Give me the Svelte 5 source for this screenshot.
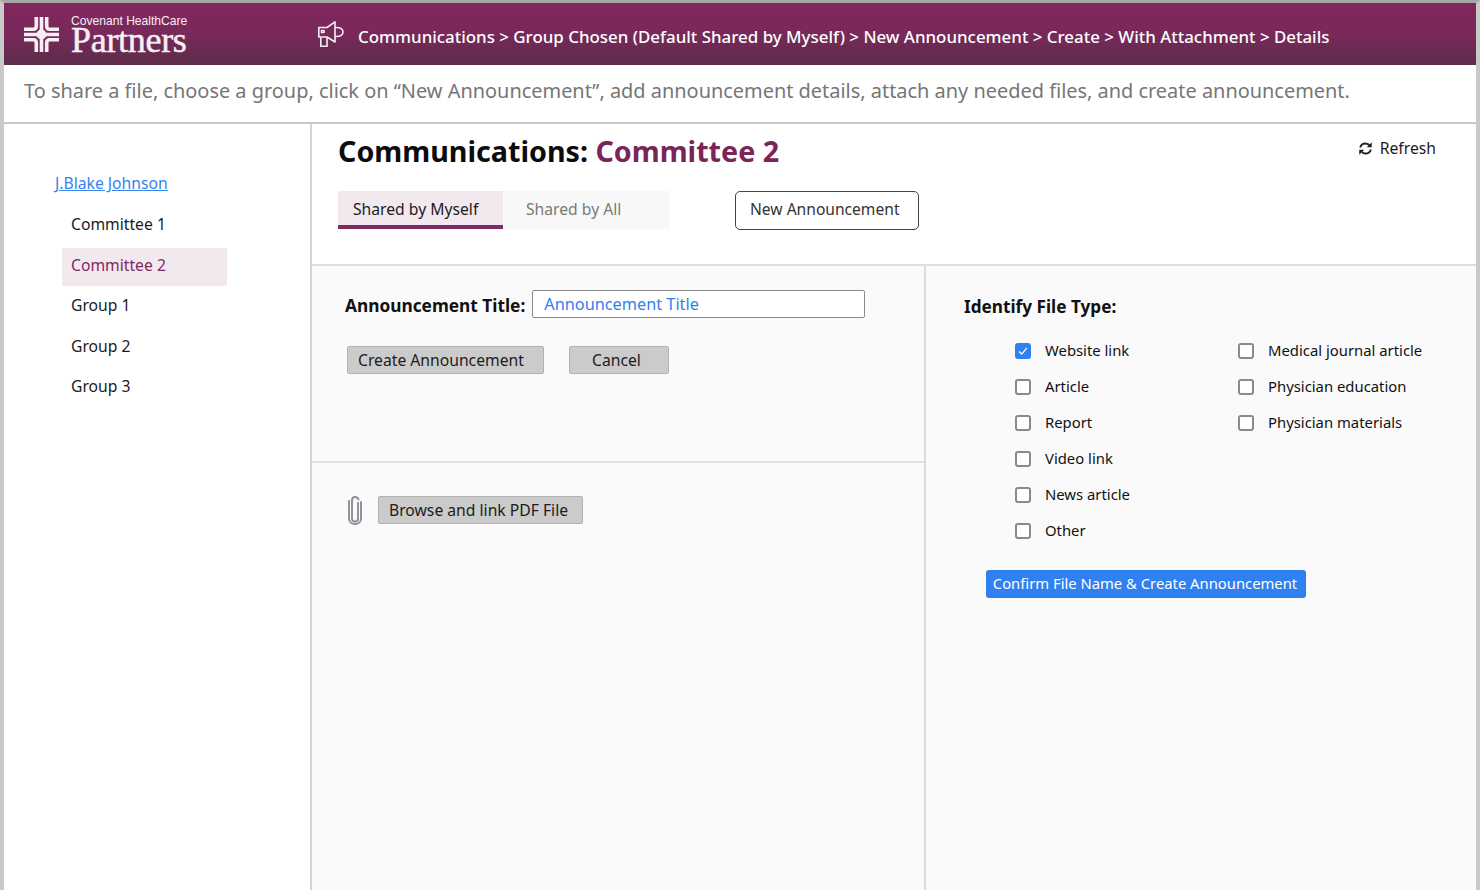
<script lang="ts">
  const groups = ['Committee 1', 'Committee 2', 'Group 1', 'Group 2', 'Group 3'];
  const activeGroup = 'Committee 2';

  const typesLeft = [
    { label: 'Website link', checked: true },
    { label: 'Article' },
    { label: 'Report' },
    { label: 'Video link' },
    { label: 'News article' },
    { label: 'Other' }
  ];
  const typesRight = [
    { label: 'Medical journal article' },
    { label: 'Physician education' },
    { label: 'Physician materials' }
  ];
</script>

<div class="frame">
  <header class="topbar">
    <div class="logo">
      <svg class="logo-mark" viewBox="0 0 35 35" fill="none" stroke="#f6eef3" stroke-width="3.600">
        <path d="M12.300 0V9.300Q12.300 12.300 9.300 12.300H0" />
        <path d="M22.700 0V9.300Q22.700 12.300 25.700 12.300H35" />
        <path d="M12.300 35V25.700Q12.300 22.700 9.300 22.700H0" />
        <path d="M22.700 35V25.700Q22.700 22.700 25.700 22.700H35" />
        <path d="M17.500 0V35M0 17.500H35" />
        <circle cx="17.500" cy="17.500" r="5" fill="#f6eef3" stroke="none" />
      </svg>
      <div class="logo-text">
        <span class="logo-top">Covenant HealthCare</span>
        <span class="logo-main">Partners</span>
      </div>
    </div>
    <svg class="horn" viewBox="0 0 26 26" fill="none" stroke="#f6eef3" stroke-width="1.600" stroke-linejoin="round">
      <path d="M0.800 6.500H9L17 0.800V21L9 16H0.800z" />
      <path d="M17 6.500C23 6 25 8.500 25 11S23 16 17 15.500" />
      <path d="M2.800 16V25.300H9V16" />
      <path d="M3.500 9.500H6V11.500H3.500z" />
    </svg>
    <nav class="crumbs">Communications &gt; Group Chosen (Default Shared by Myself) &gt; New Announcement &gt; Create &gt; With Attachment &gt; Details</nav>
  </header>

  <div class="hint">To share a file, choose a group, click on “New Announcement”, add announcement details, attach any needed files, and create announcement.</div>

  <div class="body">
    <aside class="sidebar">
      <a class="owner" href="#owner">J.Blake Johnson</a>
      <ul class="groups">
        {#each groups as group}
          <li class:active={group === activeGroup}>{group}</li>
        {/each}
      </ul>
    </aside>

    <main class="main">
      <section class="head">
        <div class="title-row">
          <h1>Communications: <span>Committee 2</span></h1>
          <button class="refresh">
            <svg viewBox="0 0 24 24" fill="none" stroke="#222" stroke-width="3">
              <path d="M3.500 10.500C4.500 6.500 8 4 12 4c3 0 5.500 1.400 7 3.800" />
              <path d="M20.500 13.500C19.500 17.500 16 20 12 20c-3 0-5.500-1.400-7-3.800" />
              <path d="M22 2V10h-8z" fill="#222" stroke="none" />
              <path d="M2 22V14h8z" fill="#222" stroke="none" />
            </svg>
            Refresh
          </button>
        </div>
        <div class="tab-row">
          <div class="tabs">
            <div class="tab on">Shared by Myself</div>
            <div class="tab">Shared by All</div>
          </div>
          <button class="new-btn">New Announcement</button>
        </div>
      </section>

      <section class="columns">
        <div class="left">
          <div class="form">
            <div class="title-field">
              <label for="ann-title">Announcement Title:</label>
              <input id="ann-title" value="Announcement Title" />
            </div>
            <div class="actions">
              <button class="grey create">Create Announcement</button>
              <button class="grey cancel">Cancel</button>
            </div>
          </div>
          <div class="attach">
            <svg class="clip" viewBox="0 0 16 30" fill="none" stroke="#8d929b" stroke-width="2" stroke-linecap="round">
              <path d="M11 8v15.500c0 1.800-1.300 3-3 3s-3-1.200-3-3V5.500C5 3.500 6.300 2 8 2s3 1.200 3.500 2.500" />
              <path d="M14 7v16.500c0 3.600-2.700 5.500-6 5.500s-6-1.900-6-5.500V6" />
            </svg>
            <button class="grey browse">Browse and link PDF File</button>
          </div>
        </div>

        <div class="right">
          <h2>Identify File Type:</h2>
          <div class="types">
            <div class="type-col first">
              {#each typesLeft as t}
                <div class="type">
                  <span class="box" class:checked={t.checked}>
                    {#if t.checked}
                      <svg viewBox="0 0 16 16" fill="none" stroke="#fff" stroke-width="1.500"><path d="M3.500 8.500l3 3 6-7" /></svg>
                    {/if}
                  </span>
                  <span class="type-label">{t.label}</span>
                </div>
              {/each}
            </div>
            <div class="type-col">
              {#each typesRight as t}
                <div class="type">
                  <span class="box"></span>
                  <span class="type-label">{t.label}</span>
                </div>
              {/each}
            </div>
          </div>
          <button class="confirm">Confirm File Name &amp; Create Announcement</button>
        </div>
      </section>
    </main>
  </div>
</div>

<style>
  :global(body) {
    background: #fff;
    overflow: hidden;
  }

  .frame {
    height: 890px;
    box-sizing: border-box;
    border-top: 3px solid #a6a6a6;
    border-left: 4px solid #c9c9c9;
    border-right: 4px solid #c9c9c9;
    display: flex;
    flex-direction: column;
    font-family: "Noto Sans", "Open Sans", sans-serif;
    font-size: 15.700px;
    color: #1c1c1c;
    overflow: hidden;
  }

  button {
    font: inherit;
    color: inherit;
    cursor: pointer;
  }

  .topbar {
    height: 62px;
    flex: none;
    display: flex;
    align-items: center;
    background: linear-gradient(#82265e 0%, #78295a 50%, #5c2c4a 100%);
    color: #fff;
  }

  .logo {
    display: flex;
    align-items: center;
    margin-left: 20px;
    width: 294px;
  }

  .logo-mark {
    width: 35px;
    height: 35px;
  }

  .logo-text {
    margin-left: 12px;
    display: flex;
    flex-direction: column;
    color: #f6eef3;
  }

  .logo-top {
    font-family: "Liberation Sans", Arial, sans-serif;
    font-size: 12.100px;
    line-height: 13px;
  }

  .logo-main {
    font-family: "Liberation Serif", "Times New Roman", serif;
    font-size: 36px;
    line-height: 25px;
    letter-spacing: -0.300px;
    -webkit-text-stroke: 0.500px #f6eef3;
  }

  .horn {
    width: 26px;
    height: 26px;
    margin-right: 14px;
  }

  .crumbs {
    margin-top: 4px;
    font-size: 16.900px;
    font-weight: 500;
    white-space: nowrap;
  }

  .hint {
    height: 59px;
    flex: none;
    box-sizing: border-box;
    border-bottom: 2px solid #c8c8c8;
    padding: 9px 0 0 20px;
    font-size: 19.930px;
    line-height: 34px;
    color: #767676;
    white-space: nowrap;
  }

  .body {
    flex: 1;
    display: flex;
    min-height: 0;
  }

  .sidebar {
    width: 308px;
    flex: none;
    box-sizing: border-box;
    border-right: 2px solid #d4d4d4;
    padding: 47px 0 0 51px;
  }

  .owner {
    color: #3284f0;
    line-height: 24px;
  }

  .groups {
    list-style: none;
    margin: 12.400px 0 0 7px;
    padding: 0;
    width: 165px;
  }

  .groups li {
    height: 38px;
    margin-bottom: 2.400px;
    padding-left: 9px;
    line-height: 34px;
  }

  .groups li.active {
    background: #f2e9ef;
    color: #7f2a63;
  }

  .main {
    flex: 1;
    display: flex;
    flex-direction: column;
    min-width: 0;
  }

  .head {
    height: 142px;
    flex: none;
    box-sizing: border-box;
    border-bottom: 2px solid #dfdfdf;
    padding: 0 40px 0 26px;
  }

  .title-row {
    display: flex;
    justify-content: space-between;
  }

  h1 {
    margin: 7px 0 0;
    font-size: 28.670px;
    line-height: 40px;
    font-weight: 700;
    color: #0c0c0c;
  }

  h1 span {
    color: #7b2458;
  }

  .refresh {
    align-self: flex-start;
    margin-top: 13px;
    padding: 0;
    border: 0;
    background: none;
    display: flex;
    align-items: center;
    gap: 7px;
    line-height: 22px;
  }

  .refresh svg {
    width: 15px;
    height: 15px;
  }

  .tab-row {
    display: flex;
    align-items: flex-start;
    margin-top: 20px;
  }

  .tabs {
    display: flex;
    width: 331px;
    height: 38px;
    background: #f8f8f8;
  }

  .tab {
    box-sizing: border-box;
    padding: 0 14px 0 23px;
    line-height: 36px;
    color: #7a7a7a;
  }

  .tab.on {
    width: 165px;
    padding-left: 15px;
    background: #f2e9ef;
    border-bottom: 4px solid #7f2a63;
    color: #1c1c1c;
  }

  .new-btn {
    margin-left: 66px;
    width: 184px;
    height: 39px;
    box-sizing: border-box;
    padding: 0 0 4px 14px;
    text-align: left;
    background: #fff;
    border: 1.500px solid #444;
    border-radius: 5px;
    font-size: 15.600px;
    color: #333;
  }

  .columns {
    flex: 1;
    display: flex;
    background: #fafafa;
    min-height: 0;
  }

  .left {
    width: 614px;
    flex: none;
    box-sizing: border-box;
    border-right: 2px solid #dcdcdc;
  }

  .form {
    height: 197px;
    box-sizing: border-box;
    border-bottom: 2px solid #dfdfdf;
    padding: 27px 0 0 33px;
  }

  .title-field {
    display: flex;
    align-items: center;
    gap: 7px;
  }

  .title-field label {
    font-weight: 700;
    font-size: 17.300px;
    color: #111;
    white-space: nowrap;
  }

  .title-field input {
    width: 333px;
    height: 28px;
    box-sizing: border-box;
    margin-top: -3px;
    padding: 0 11px;
    border: 1.500px solid #8a8a8a;
    border-radius: 2px;
    background: #fff;
    font: inherit;
    font-size: 16.300px;
    color: #2f80f0;
    outline: none;
  }

  .actions {
    display: flex;
    gap: 25px;
    margin: 28px 0 0 2px;
  }

  .grey {
    height: 28px;
    box-sizing: border-box;
    padding: 0 0 0 10px;
    text-align: left;
    background: #cbcbcb;
    border: 1px solid #b2b2b2;
    border-radius: 2px;
    line-height: 26px;
  }

  .create {
    width: 197px;
  }

  .cancel {
    width: 100px;
    padding-left: 22px;
  }

  .attach {
    display: flex;
    align-items: center;
    padding: 32px 0 0 35px;
    gap: 15px;
  }

  .clip {
    width: 16px;
    height: 30px;
  }

  .browse {
    width: 205px;
  }

  .right {
    flex: 1;
    min-width: 0;
    padding: 28px 0 0 38px;
  }

  h2 {
    margin: 0;
    font-size: 17.200px;
    line-height: 26px;
    font-weight: 700;
    color: #111;
  }

  .types {
    display: flex;
    margin: 13px 0 0 51px;
  }

  .type-col.first {
    width: 223px;
  }

  .type {
    height: 36px;
    display: flex;
    align-items: center;
    gap: 14px;
    font-size: 14.850px;
    white-space: nowrap;
    color: #111;
  }

  .type-label {
    margin-top: -2px;
  }

  .box {
    width: 16px;
    height: 16px;
    box-sizing: border-box;
    flex: none;
    background: #fff;
    border: 2px solid #8a8a8a;
    border-radius: 3px;
    display: flex;
    align-items: center;
    justify-content: center;
  }

  .box.checked {
    background: #2f80f0;
    border-color: #2f80f0;
  }

  .box svg {
    width: 14px;
    height: 14px;
    flex: none;
  }

  .confirm {
    display: block;
    margin: 21px 0 0 22px;
    width: 320px;
    height: 28px;
    padding: 0 2px 2px 0;
    border: 0;
    border-radius: 3px;
    background: #2f80f0;
    color: #fff;
    font-size: 14.800px;
  }
</style>
